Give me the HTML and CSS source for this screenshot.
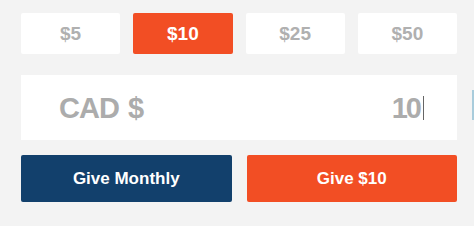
FILE: index.html
```html
<!DOCTYPE html>
<html lang="en">
<head>
  <meta charset="UTF-8">
  <meta name="viewport" content="width=device-width, initial-scale=1.0">
  <title>Donate</title>
  <link rel="stylesheet" href="styles.css">
</head>
<body>
  <div id="wrap">
    <div class="amounts">
      <div class="amt">$5</div>
      <div class="amt on">$10</div>
      <div class="amt">$25</div>
      <div class="amt">$50</div>
    </div>
    <div class="field">
      <span class="cur">CAD $</span>
      <span class="val">10<i class="caret"></i></span>
    </div>
    <div class="actions">
      <div class="btn monthly">Give Monthly</div>
      <div class="btn give">Give $10</div>
    </div>
    <div class="edge"></div>
  </div>
</body>
</html>
```

FILE: styles.css
```css
* { margin: 0; padding: 0; box-sizing: border-box; }
body {
  background: #fff;
  font-family: "Liberation Sans", Arial, sans-serif;
  font-weight: bold;
}
#wrap {
  position: relative;
  height: 226px;
  background: #f3f3f3;
  padding: 13px 17px 0 21px;
}
.amounts {
  display: grid;
  grid-template-columns: repeat(4, 1fr);
  gap: 13px;
}
.amt {
  height: 41px;
  background: #fff;
  border-radius: 2px;
  color: #b0b0b0;
  font-size: 19px;
  display: flex;
  align-items: center;
  justify-content: center;
}
.amt.on {
  background: #f24e24;
  color: #fff;
}
.field {
  margin-top: 21px;
  height: 65px;
  background: #fff;
  display: flex;
  align-items: center;
  justify-content: space-between;
  padding: 1px 33px 0 38px;
  color: #acacac;
  font-size: 29px;
}
.cur {
  letter-spacing: -1px;
  word-spacing: 2px;
}
.val {
  display: flex;
  align-items: center;
  letter-spacing: -2px;
}
.caret {
  display: inline-block;
  width: 1px;
  height: 24px;
  background: #666;
  margin-left: 3px;
}
.actions {
  margin-top: 15px;
  display: grid;
  grid-template-columns: 1fr 1fr;
  gap: 15px;
}
.btn {
  height: 47px;
  border-radius: 2px;
  color: #fff;
  font-size: 17px;
  display: flex;
  align-items: center;
  justify-content: center;
}
.monthly { background: #12406c; }
.give { background: #f24e24; }
.edge {
  position: absolute;
  right: 0;
  top: 90px;
  width: 2px;
  height: 30px;
  background: #a9ccdc;
}
```
